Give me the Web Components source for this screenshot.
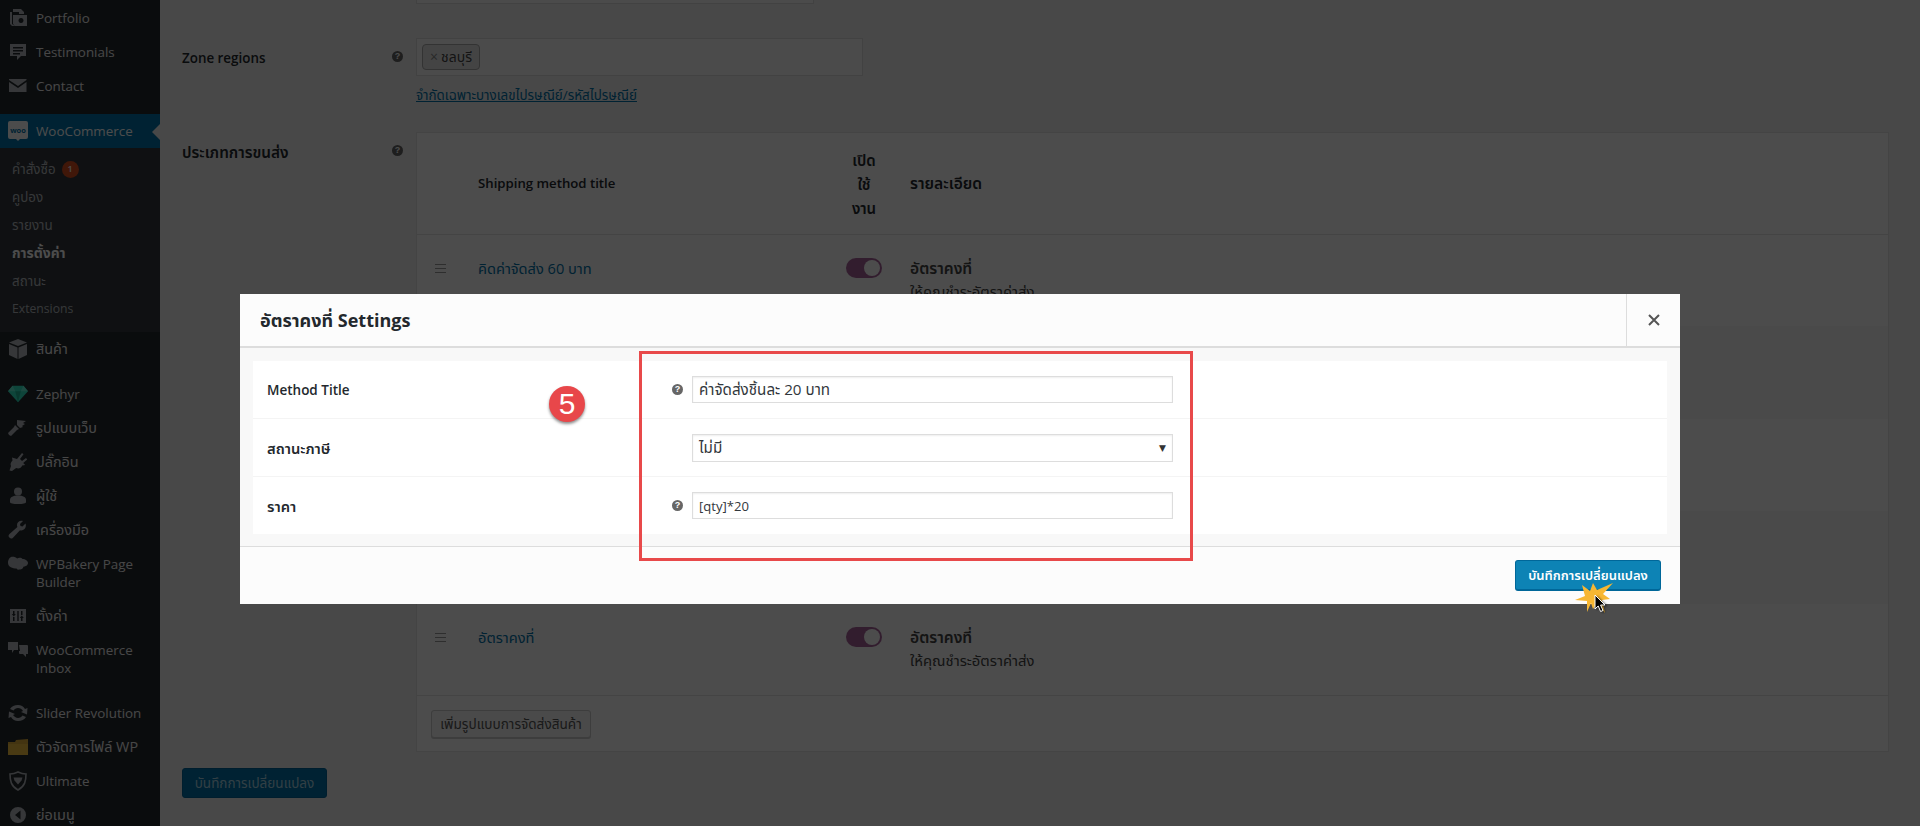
<!DOCTYPE html>
<html lang="th">
<head>
<meta charset="utf-8">
<title>Shipping zone</title>
<style>
  html, body { margin: 0; height: 100%; overflow: hidden; }
  body {
    background: #f1f1f1;
    color: #444;
    font: 14px/1.4 "Open Sans", "Noto Sans", "Noto Sans Thai", Tahoma, "DejaVu Sans", sans-serif;
  }
  #shell { display: flex; height: 826px; overflow: hidden; }
</style>
</head>
<body>
<div id="shell">
  <wp-sidebar></wp-sidebar>
  <zone-page></zone-page>
</div>
<page-overlay></page-overlay>
<method-modal></method-modal>
<click-cursor></click-cursor>

<script>
const icons = {
  portfolio: `<svg viewBox="0 0 20 20" width="20" height="20"><path fill="currentColor" fill-rule="evenodd" d="M5 1h8l3 3v2h-5V4H5zM2 4h2v12l3 2H4l-2-2zM5 7h14v11H7l-2-2zM13 10a2.500 2.500 0 1 0 .01 0z"/></svg>`,
  testimonials: `<svg viewBox="0 0 20 20" width="20" height="20"><path fill="currentColor" fill-rule="evenodd" d="M2 2h16v12h-5l-4 4v-4H2zM5 5v1.500h10V5zM5 8v1.500h10V8zM5 11v1.500h7V11z"/></svg>`,
  contact: `<svg viewBox="0 0 20 20" width="20" height="20"><path fill="currentColor" d="M1 3h17.500v1L10 10 1 4zM1 6l9 6 8.500-6v10H1z"/></svg>`,
  woo: `<svg viewBox="0 0 20 20" width="20" height="20"><path fill="currentColor" d="M2 0h16a2 2 0 0 1 2 2v14a2 2 0 0 1-2 2h-6l-2 2-2-2H2a2 2 0 0 1-2-2V2a2 2 0 0 1 2-2z"/><text x="10" y="12" text-anchor="middle" font-size="7.500" font-weight="700" fill="#0073aa" font-family="Open Sans">woo</text></svg>`,
  box: `<svg viewBox="0 0 20 20" width="20" height="20"><path fill="currentColor" d="M10 0l9 3.500L10 7 1 3.500zM1 5l8.500 3.500V20L1 16zM19 5v11l-8.500 4V8.500z"/></svg>`,
  gem: `<svg viewBox="0 0 22 18" width="22" height="18"><path fill="#2fe8c4" d="M5 0h12l5 6-11 12L0 6z"/><path fill="#62f5d8" d="M5 0l3 6H0zM17 0l-3 6h8z"/><path fill="#1fbc9c" d="M8 6h6l-3 12z"/></svg>`,
  brush: `<svg viewBox="0 0 20 20" width="20" height="20"><path fill="currentColor" d="M9 2l9 1-3 2 2 1-3 2 1 1-3 1-3-3zM7 7l4 4-2 1-6 6-2-1-1-2 6-6z"/></svg>`,
  plug: `<svg viewBox="0 0 20 20" width="20" height="20"><path fill="currentColor" d="M14 1l1.500 1.200L12 7l2 2 4-3 1.200 1.500-4 3.500 2 2-3 .5c-1 2.500-3.500 3.500-6 2.500L4 19l-2.500-.5L3 14c-1-2 0-4 1.500-5.500L4 5.500 9 7z"/></svg>`,
  user: `<svg viewBox="0 0 20 20" width="20" height="20"><circle cx="10" cy="5.500" r="4" fill="currentColor"/><path fill="currentColor" d="M2 14c0-3 3-4.500 8-4.500s8 1.500 8 4.500v2c0 1.500-3 2-8 2s-8-.5-8-2z"/></svg>`,
  wrench: `<svg viewBox="0 0 20 20" width="20" height="20"><path fill="currentColor" d="M17.500 3.500l-3 3-2-.5-.5-2 3-3c-3-1-6 1-6 4 0 .8.100 1.400.4 2L1.500 14a2.500 2.500 0 0 0 3.500 3.700l7-7.400c3.500 1 7-2.300 5.500-6.800z"/></svg>`,
  cloud: `<svg viewBox="0 0 22 18" width="22" height="18"><path fill="currentColor" d="M5 1c2 0 4 .5 5 2 2-1.500 5-1 6 .5 3 0 6 2 6 4.500s-3 4-5 4c-.5 2-2 3-3.500 3S10 16 9.500 14C5 14 0 12 0 7.500 0 4 2 1 5 1z"/></svg>`,
  sliders: `<svg viewBox="0 0 20 20" width="20" height="20"><path fill="currentColor" fill-rule="evenodd" d="M2 3h16v14H2zM5 5v3H3.800l2 2.500 2-2.500H6.500V5zM5 11v4h1.500v-4zM13 15v-3h-1.200l2-2.500 2 2.500h-1.300v3zM13 9V5h1.500v4zM9.300 5v10h1.400V5z"/></svg>`,
  chat: `<svg viewBox="0 0 20 20" width="20" height="20"><path fill="currentColor" d="M0 2h10v8H6l-2 3v-3H0zM11 5h8a1 1 0 0 1 1 1v8h-2v3l-3-3h-3a1 1 0 0 1-1-1V11h1z"/></svg>`,
  refresh: `<svg viewBox="0 0 20 20" width="20" height="20"><path fill="currentColor" d="M10 2c3 0 5.500 1.500 7 4l2.500-1-.5 6.500-6-2.500 2-1C14 6 12 5 10 5 8 5 6.500 6 5.500 7.500L2 6C3.500 3.500 6.500 2 10 2zM1 8.500l6 2.500-2 1c1 1.500 3 3 5 3s3.500-1 4.500-2.500L18 14c-1.500 2.500-4.500 4-8 4-3 0-5.500-1.500-7-4L.5 15z"/></svg>`,
  folder: `<svg viewBox="0 0 20 16" width="20" height="16"><path fill="#e0ae3a" d="M0 3h7l1-2 12-1v16H0z"/><path fill="#f5c242" d="M0 5h20v11H0z"/></svg>`,
  shield: `<svg viewBox="0 0 20 20" width="20" height="20"><path fill="none" stroke="currentColor" stroke-width="1.600" d="M10 1c3 1.500 5 2 8 2 0 7-1 12-8 16C3 15 2 10 2 3c3 0 5-.5 8-2z"/><path fill="currentColor" d="M5.500 6.500h9l-1 3-3.500 4-3.500-4z"/></svg>`,
  collapse: `<svg viewBox="0 0 20 20" width="20" height="20"><path fill="currentColor" fill-rule="evenodd" d="M10 2a8 8 0 1 1 0 16 8 8 0 0 1 0-16zM12.500 5.500L7 10l5.500 4.500z"/></svg>`
};

const menuTemplate = document.createElement("template");
menuTemplate.innerHTML = `
  <style>
    :host { display: block; width: 160px; height: 100%; flex: none; background: #23282d; color: #eee; padding-top: 1px; overflow: hidden; box-sizing: border-box; }
    .gap { height: 11px; }
    .sub { background: #32373c; padding: 7px 0 9px; }
  </style>
  <menu-item icon="portfolio" lat>Portfolio</menu-item>
  <menu-item icon="testimonials" lat>Testimonials</menu-item>
  <menu-item icon="contact" lat>Contact</menu-item>
  <div class="gap"></div>
  <menu-item icon="woo" lat current>WooCommerce</menu-item>
  <div class="sub">
    <menu-sub>คำสั่งซื้อ <span slot="badge">1</span></menu-sub>
    <menu-sub>คูปอง</menu-sub>
    <menu-sub>รายงาน</menu-sub>
    <menu-sub current>การตั้งค่า</menu-sub>
    <menu-sub>สถานะ</menu-sub>
    <menu-sub lat>Extensions</menu-sub>
  </div>
  <menu-item icon="box">สินค้า</menu-item>
  <div class="gap"></div>
  <menu-item icon="gem" lat>Zephyr</menu-item>
  <menu-item icon="brush">รูปแบบเว็บ</menu-item>
  <menu-item icon="plug">ปลั๊กอิน</menu-item>
  <menu-item icon="user">ผู้ใช้</menu-item>
  <menu-item icon="wrench">เครื่องมือ</menu-item>
  <menu-item icon="cloud" lat>WPBakery Page Builder</menu-item>
  <menu-item icon="sliders">ตั้งค่า</menu-item>
  <menu-item icon="chat" lat>WooCommerce Inbox</menu-item>
  <div class="gap"></div>
  <menu-item icon="refresh" lat>Slider Revolution</menu-item>
  <menu-item icon="folder">ตัวจัดการไฟล์ WP</menu-item>
  <menu-item icon="shield" lat>Ultimate</menu-item>
  <menu-item icon="collapse">ย่อเมนู</menu-item>
`;

class WpSidebar extends HTMLElement {
  constructor() {
    super();
    this.attachShadow({ mode: "open" }).appendChild(menuTemplate.content.cloneNode(true));
  }
}

class MenuItem extends HTMLElement {
  constructor() {
    super();
    const name = this.getAttribute("icon");
    this.attachShadow({ mode: "open" }).innerHTML = `
      <style>
        :host { display: flex; position: relative; min-height: 34px; box-sizing: border-box; padding: 8px 8px 8px 36px; line-height: 18px; font-size: 14.400px; color: #eee; }
        :host([lat]) { font-size: 13.400px; }
        :host([current]) { background: #0073aa; color: #fff; }
        :host([current])::after { content: ""; position: absolute; right: 0; top: 10px; border: 8px solid transparent; border-right-color: #f1f1f1; border-left-width: 0; }
        .icon { position: absolute; left: 8px; top: 7px; width: 20px; height: 20px; display: flex; align-items: center; justify-content: center; color: #b4b9be; }
        :host([current]) .icon { color: #fff; }
      </style>
      <span class="icon">${icons[name] || ""}</span><span><slot></slot></span>`;
  }
}

class MenuSub extends HTMLElement {
  constructor() {
    super();
    this.attachShadow({ mode: "open" }).innerHTML = `
      <style>
        :host { display: flex; align-items: center; gap: 6px; height: 28px; padding-left: 12px; font-size: 13.400px; color: rgba(240,245,250,.7); }
        :host([lat]) { font-size: 12.200px; }
        :host([current]) { color: #fff; font-weight: 700; font-size: 13.800px; }
        ::slotted([slot=badge]) { display: flex; align-items: center; justify-content: center; width: 17px; height: 17px; border-radius: 50%; background: #d54e21; color: #fff; font-size: 9px; font-weight: 600; }
      </style>
      <slot></slot><slot name="badge"></slot>`;
  }
}

class HelpTip extends HTMLElement {
  constructor() {
    super();
    this.attachShadow({ mode: "open" }).innerHTML = `
      <style>
        :host { display: inline-flex; width: 11px; height: 11px; border-radius: 50%; background: #666; color: #fff; font: 700 9px/11px "Liberation Sans", sans-serif; align-items: center; justify-content: center; flex: none; }
      </style>?`;
  }
}

class FormRow extends HTMLElement {
  constructor() {
    super();
    this.attachShadow({ mode: "open" }).innerHTML = `
      <style>
        :host { display: grid; grid-template-columns: 210px 24px 1fr; padding-left: 22px; padding-right: 31px; }
        .label { color: #23282d; font-weight: 600; line-height: 20px; font-size: 13.400px; }
        :host([thai]) .label { font-size: 15.300px; }
        .tip { padding-top: 3px; line-height: 0; }
      </style>
      <div class="label"><slot name="label"></slot></div>
      <div class="tip"><help-tip></help-tip></div>
      <div><slot></slot></div>`;
  }
}

class ShipRow extends HTMLElement {
  constructor() {
    super();
    const title = this.getAttribute("title-text");
    this.attachShadow({ mode: "open" }).innerHTML = `
      <style>
        :host { display: grid; grid-template-columns: 61px 368px 64px 1fr; height: 91px; box-sizing: border-box; padding-top: 23px; background: #fdfdfd; line-height: 20px; font-size: 14.600px; }
        .handle { padding-left: 18px; padding-top: 6px; }
        .handle i { display: block; width: 11px; height: 1px; margin-bottom: 3px; background: #999; }
        a { color: #0073aa; }
        .sw { width: 36px; height: 20px; border-radius: 10px; background: #a9639b; position: relative; }
        .sw::after { content: ""; position: absolute; right: 2px; top: 2px; width: 16px; height: 16px; border-radius: 50%; background: #fff; }
        b { display: block; font-weight: 600; color: #444; font-size: 15.600px; }
        p { margin: 3px 0 0; color: #444; font-size: 14.800px; }
      </style>
      <div class="handle"><i></i><i></i><i></i></div>
      <div><a>${title}</a></div>
      <div><div class="sw"></div></div>
      <div><b>อัตราคงที่</b><p>ให้คุณชำระอัตราค่าส่ง</p></div>`;
  }
}

const pageTemplate = document.createElement("template");
pageTemplate.innerHTML = `
  <style>
    :host { display: block; flex: 1; min-width: 0; font-size: 13px; }
    .stub { height: 4px; width: 398px; margin-left: 256px; background: #fcfcfc; border: 1px solid #ddd; border-top: 0; box-sizing: border-box; }
    .zone { margin-top: 44px; }
    .regions { margin-top: -10px; width: 447px; height: 38px; box-sizing: border-box; background: #fcfcfc; border: 1px solid #ddd; padding: 5px; }
    .tag { display: inline-flex; align-items: center; gap: 3px; height: 26px; width: 58px; box-sizing: border-box; padding: 0 0 0 7px; border: 1px solid #aaa; border-radius: 4px; background: #e4e4e4; color: #444; font-size: 14px; }
    .tag i { font-style: normal; color: #888; }
    .limit { display: block; margin-top: 9px; line-height: 20px; color: #0073aa; text-decoration: underline; font-size: 13.400px; }
    .types { margin-top: 37px; }
    .table { margin-top: -10px; background: #fdfdfd; border: 1px solid #e5e5e5; box-sizing: border-box; }
    .head { display: grid; grid-template-columns: 61px 368px 64px 1fr; height: 101px; align-items: center; border-bottom: 1px solid #e5e5e5; font-weight: 600; color: #23282d; font-size: 13.200px; }
    .head .on { line-height: 24px; width: 36px; text-align: center; font-size: 15px; }
    .head .on span { display: block; white-space: nowrap; }
    .head .th { font-size: 15.600px; }
    .hidden-rows { height: 278px; display: flex; flex-direction: column; }
    .hidden-rows div { flex: 1; }
    .hidden-rows div:nth-child(odd) { background: #f8f8f8; }
    .foot { padding: 14px 0 13px 14px; border-top: 1px solid #e5e5e5; height: 56px; box-sizing: border-box; }
    .add { display: inline-flex; align-items: center; justify-content: center; height: 28px; width: 160px; white-space: nowrap; box-sizing: border-box; border: 1px solid #ccc; border-radius: 3px; background: #f7f7f7; box-shadow: 0 1px 0 #ccc; color: #555; font-size: 13.600px; }
    .save { display: flex; align-items: center; justify-content: center; margin: 16px 0 0 22px; width: 145px; height: 30px; box-sizing: border-box; background: #0073aa; border: 1px solid #00669a; border-radius: 3px; color: #a8d4e6; font-size: 13.500px; }
  </style>
  <div class="stub"></div>
  <form-row class="zone">
    <span slot="label">Zone regions</span>
    <div class="regions"><span class="tag"><i>×</i>ชลบุรี</span></div>
    <a class="limit">จำกัดเฉพาะบางเลขไปรษณีย์/รหัสไปรษณีย์</a>
  </form-row>
  <form-row class="types" thai>
    <span slot="label">ประเภทการขนส่ง</span>
    <div class="table">
      <div class="head">
        <span></span>
        <span>Shipping method title</span>
        <span class="on"><span>เปิด</span><span>ใช้</span><span>งาน</span></span>
        <span class="th">รายละเอียด</span>
      </div>
      <ship-row title-text="คิดค่าจัดส่ง 60 บาท"></ship-row>
      <div class="hidden-rows"><div></div><div></div><div></div></div>
      <ship-row title-text="อัตราคงที่"></ship-row>
      <div class="foot"><span class="add">เพิ่มรูปแบบการจัดส่งสินค้า</span></div>
    </div>
  </form-row>
  <div class="save">บันทึกการเปลี่ยนแปลง</div>
`;

class ZonePage extends HTMLElement {
  constructor() {
    super();
    this.attachShadow({ mode: "open" }).appendChild(pageTemplate.content.cloneNode(true));
  }
}

class PageOverlay extends HTMLElement {
  constructor() {
    super();
    this.attachShadow({ mode: "open" }).innerHTML = `
      <style>:host { display: block; position: fixed; inset: 0; background: rgba(0,0,0,.7); }</style>`;
  }
}

class ModalField extends HTMLElement {
  constructor() {
    super();
    const tip = this.hasAttribute("tip");
    this.attachShadow({ mode: "open" }).innerHTML = `
      <style>
        :host { display: grid; grid-template-columns: 405px 20px 481px; align-items: center; flex: 1; padding-left: 14px; border-bottom: 1px solid #f4f4f4; }
        :host(:last-child) { border-bottom: 0; }
        .label { color: #23282d; font-weight: 600; padding-top: 2px; font-size: var(--label-size, 13.500px); }
        .box { height: 27px; box-sizing: border-box; border: 1px solid #ddd; box-shadow: inset 0 1px 2px rgba(0,0,0,.07); padding: 1px 6px 0; display: flex; align-items: center; justify-content: space-between; color: #32373c; font-size: var(--value-size, 15.200px); background: #fff; }
        :host([select]) .box { height: 28px; }
        .arrow { font-size: 9px; color: #333; }
        .tipc { line-height: 0; }
      </style>
      <div class="label"><slot name="label"></slot></div>
      <div class="tipc">${tip ? "<help-tip></help-tip>" : ""}</div>
      <div class="box"><span><slot></slot></span>${this.hasAttribute("select") ? '<span class="arrow">▼</span>' : ""}</div>`;
  }
}

const modalTemplate = document.createElement("template");
modalTemplate.innerHTML = `
  <style>
    :host { display: flex; flex-direction: column; position: fixed; left: 240px; top: 294px; width: 1440px; height: 310px; background: #fcfcfc; color: #444; }
    header { display: flex; height: 54px; flex: none; box-sizing: border-box; border-bottom: 2px solid #ddd; align-items: center; justify-content: space-between; }
    h1 { margin: 0 0 0 20px; font-size: 18px; font-weight: 700; color: #23282d; line-height: 1; }
    .close { width: 54px; height: 100%; box-sizing: border-box; border-left: 1px solid #ddd; display: flex; align-items: center; justify-content: center; }
    .body { height: 199px; flex: none; box-sizing: border-box; padding: 13px 13px 12px; background: #f8f8f8; border-bottom: 1px solid #ddd; }
    .panel { height: 100%; background: #fff; display: flex; flex-direction: column; }
    .thai { --label-size: 14.700px; }
    .qty { --value-size: 13.100px; }
    footer { flex: 1; display: flex; justify-content: flex-end; align-items: flex-start; padding: 13px 19px 0 0; }
    .btn { width: 146px; height: 31px; box-sizing: border-box; display: flex; align-items: center; justify-content: center; background: #0d83b5; border: 1px solid #006799; border-bottom-width: 2px; border-radius: 3px; color: #fff; font-weight: 600; font-size: 13px; }
  </style>
  <header>
    <h1>อัตราคงที่ Settings</h1>
    <div class="close"><svg width="12" height="12" viewBox="0 0 12 12"><path d="M1 1l10 10M11 1L1 11" stroke="#555" stroke-width="2"/></svg></div>
  </header>
  <div class="body">
    <div class="panel">
      <modal-field tip><span slot="label">Method Title</span>ค่าจัดส่งชิ้นละ 20 บาท</modal-field>
      <modal-field select class="thai"><span slot="label">สถานะภาษี</span>ไม่มี</modal-field>
      <modal-field tip class="thai qty"><span slot="label">ราคา</span>[qty]*20</modal-field>
    </div>
  </div>
  <footer><div class="btn">บันทึกการเปลี่ยนแปลง</div></footer>
  <step-mark></step-mark>
`;

class MethodModal extends HTMLElement {
  constructor() {
    super();
    this.attachShadow({ mode: "open" }).appendChild(modalTemplate.content.cloneNode(true));
  }
}

// the red highlight box and the numbered dot sit on top of the screenshot
class StepMark extends HTMLElement {
  constructor() {
    super();
    this.attachShadow({ mode: "open" }).innerHTML = `
      <style>
        :host { display: contents; }
        .frame { position: absolute; left: 399px; top: 57px; width: 554px; height: 210px; box-sizing: border-box; border: 3px solid #e8494a; }
        .dot { position: absolute; left: 309px; top: 92px; width: 36px; height: 36px; border-radius: 50%; background: #e8474a; color: #fff; display: flex; align-items: center; justify-content: center; font: 30px/36px "Liberation Sans", sans-serif; box-shadow: 0 2px 3px rgba(0,0,0,.45); }
      </style>
      <div class="frame"></div>
      <div class="dot">5</div>`;
  }
}

class ClickCursor extends HTMLElement {
  constructor() {
    super();
    this.attachShadow({ mode: "open" }).innerHTML = `
      <style>:host { display: block; position: fixed; left: 1572px; top: 580px; width: 50px; height: 40px; }</style>
      <svg width="50" height="40" viewBox="0 0 50 40">
        <path fill="#f7b733" d="M21 3l4 7L41 3 31 14l7 5-8 1 3 13-8-10-4 6-2-6-4 9V21L3 20l10-4-3-11 8 6z"/>
        <path fill="#000" stroke="#fff" stroke-width="1" d="M23 15v14l3.200-3 2.400 5.500 2.400-1-2.400-5.500h4.400z" style="filter: drop-shadow(2px 1px 1px rgba(0,0,0,.5))"/>
      </svg>`;
  }
}

customElements.define("menu-item", MenuItem);
customElements.define("menu-sub", MenuSub);
customElements.define("wp-sidebar", WpSidebar);
customElements.define("help-tip", HelpTip);
customElements.define("form-row", FormRow);
customElements.define("ship-row", ShipRow);
customElements.define("zone-page", ZonePage);
customElements.define("page-overlay", PageOverlay);
customElements.define("modal-field", ModalField);
customElements.define("step-mark", StepMark);
customElements.define("method-modal", MethodModal);
customElements.define("click-cursor", ClickCursor);
</script>
</body>
</html>
